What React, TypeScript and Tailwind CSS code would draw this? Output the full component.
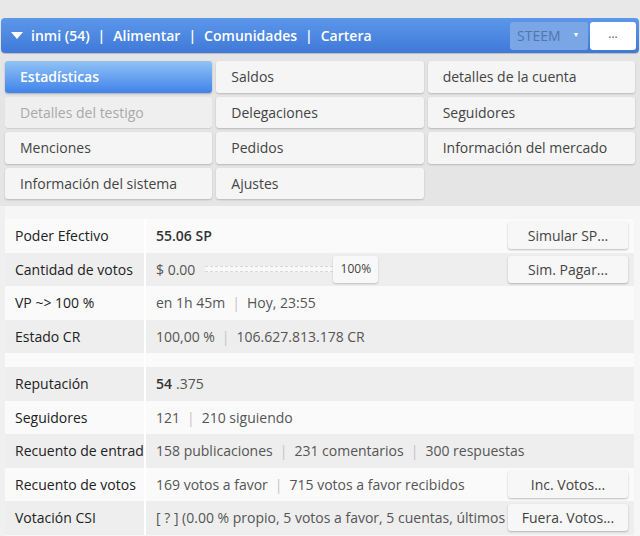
import type { ReactNode } from 'react';

const menu: { label: string; state?: 'active' | 'disabled' }[] = [
  { label: 'Estadísticas', state: 'active' },
  { label: 'Saldos' },
  { label: 'detalles de la cuenta' },
  { label: 'Detalles del testigo', state: 'disabled' },
  { label: 'Delegaciones' },
  { label: 'Seguidores' },
  { label: 'Menciones' },
  { label: 'Pedidos' },
  { label: 'Información del mercado' },
  { label: 'Información del sistema' },
  { label: 'Ajustes' },
];

function Sep() {
  return <span className="mx-[7px] text-[#c4c4c4]">|</span>;
}

function NavSep() {
  return <span className="mx-[8px]">|</span>;
}

function SideButton({ children }: { children: ReactNode }) {
  return (
    <button className="h-[27px] w-[120px] shrink-0 rounded-[3px] bg-[#f7f7f7] text-center text-[14px] text-[#444] shadow-[0_1px_2px_rgba(0,0,0,0.25)]">
      {children}
    </button>
  );
}

function Row({
  label,
  children,
  dark,
  action,
}: {
  label: string;
  children?: ReactNode;
  dark?: boolean;
  action?: ReactNode;
}) {
  return (
    <div className={`flex h-[33.5px] items-center ${dark ? 'bg-[#eeeeee]' : 'bg-[#fafafa]'}`}>
      <div className="flex h-full w-[141px] shrink-0 items-center overflow-hidden whitespace-nowrap border-r-2 border-white pl-[10px] text-[14px] text-[#222]">
        {label}
      </div>
      <div className="flex h-full min-w-0 flex-1 items-center overflow-hidden whitespace-nowrap pl-[10px] text-[14px] text-[#555]">
        {children}
      </div>
      {action && <div className="flex items-center pr-[6px]">{action}</div>}
    </div>
  );
}

export default function App() {
  return (
    <div className="h-[536px] w-[640px] overflow-hidden bg-[#e8e8e8] pt-[18px]" style={{ fontFamily: '"Open Sans", "Noto Sans", sans-serif' }}>
      {/* top bar */}
      <div className="mx-px flex h-[35px] items-center rounded-[4px] bg-gradient-to-b from-[#5d97ea] to-[#3f79d8] pl-[10px] pr-[3px] text-[14px] font-semibold text-white shadow-[0_1px_1px_rgba(0,0,0,0.2)]">
        <svg width="12" height="8" viewBox="0 0 12 8" className="mr-[8px]">
          <path d="M0 0 L12 0 L6 7 Z" fill="white" />
        </svg>
        <span>inmi (54)</span>
        <NavSep />
        <span>Alimentar</span>
        <NavSep />
        <span>Comunidades</span>
        <NavSep />
        <span>Cartera</span>
        <div className="ml-auto flex h-[28px] items-center gap-[2px]">
          <div className="flex h-full w-[78px] items-center rounded-[3px] bg-[#7aa6e6] pl-[7px] text-[14px] font-normal text-[#5275ad]">
            STEEM
            <span className="ml-[12px] text-[7px] text-white">▼</span>
          </div>
          <div className="flex h-full w-[46px] items-center justify-center rounded-[3px] bg-white pb-[4px] text-[12px] font-normal text-[#555]">
            ...
          </div>
        </div>
      </div>

      {/* menu grid */}
      <div className="mt-[2px] bg-[#e5e5e5] px-[5px] pb-[7px] pt-[6px]">
        <div className="grid grid-cols-3 gap-x-[4px] gap-y-[4px]">
          {menu.map((m) => (
            <div
              key={m.label}
              className={`flex h-[31.5px] items-center rounded-[3px] pl-[15px] text-[14px] ${
                m.state === 'active'
                  ? 'bg-gradient-to-b from-[#92c3f7] to-[#3f82e8] font-semibold text-white shadow-[0_1px_2px_rgba(0,0,0,0.25)]'
                  : m.state === 'disabled'
                    ? 'bg-[#efefef] text-[#a9a9a9] shadow-[0_1px_1px_rgba(0,0,0,0.1)]'
                    : 'bg-[#f5f5f5] text-[#444] shadow-[0_1px_2px_rgba(0,0,0,0.2)]'
              }`}
            >
              {m.label}
            </div>
          ))}
        </div>
      </div>

      {/* stats table */}
      <div className="h-full border-l-[5px] border-[#f0f0f0] bg-[#f6f6f6] pr-[6px] pt-[13px]">
        <Row label="Poder Efectivo" action={<SideButton>Simular SP...</SideButton>}>
          <span className="font-semibold text-[#333]">55.06 SP</span>
        </Row>
        <Row label="Cantidad de votos" dark action={<SideButton>Sim. Pagar...</SideButton>}>
          <span>$ 0.00</span>
          <div className="ml-[10px] h-[6px] w-[128px] border-y border-dashed border-[#d8d8d8] bg-[#f8f8f8]" />
          <span className="flex h-[27px] w-[45px] items-center justify-center rounded-[3px] bg-[#f8f8f8] text-[12px] text-[#444] shadow-[0_1px_2px_rgba(0,0,0,0.2)]">
            100%
          </span>
        </Row>
        <Row label="VP ~> 100 %">
          en 1h 45m <Sep /> Hoy, 23:55
        </Row>
        <Row label="Estado CR" dark>
          100,00 % <Sep /> 106.627.813.178 CR
        </Row>
        <div className="flex h-[14px] bg-[#fafafa]">
          <div className="w-[141px] border-r-2 border-white" />
        </div>
        <Row label="Reputación" dark>
          <span className="mr-[4px] font-semibold text-[#333]">54</span>.375
        </Row>
        <Row label="Seguidores">
          121 <Sep /> 210 siguiendo
        </Row>
        <Row label="Recuento de entradas" dark>
          158 publicaciones <Sep /> 231 comentarios <Sep /> 300 respuestas
        </Row>
        <Row label="Recuento de votos" action={<SideButton>Inc. Votos...</SideButton>}>
          169 votos a favor <Sep /> 715 votos a favor recibidos
        </Row>
        <Row label="Votación CSI" dark action={<SideButton>Fuera. Votos...</SideButton>}>
          [ ? ] (0.00 % propio, 5 votos a favor, 5 cuentas, últimos 7 días)
        </Row>
      </div>
    </div>
  );
}
